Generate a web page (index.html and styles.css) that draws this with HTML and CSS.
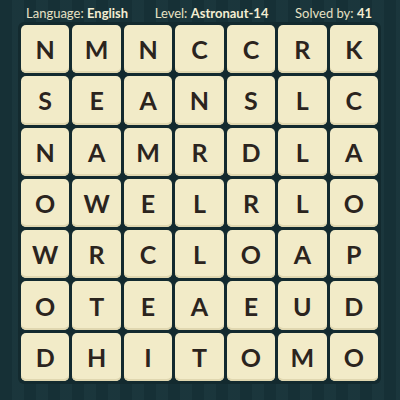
FILE: index.html
```html
<!DOCTYPE html>
<html lang="en">
<head>
    <meta charset="UTF-8">
    <title>Astronaut-14</title>
    <link rel="stylesheet" href="styles.css">
</head>
<body>
    <header class="info">
        <span class="info-item">Language: <b>English</b></span>
        <span class="info-item">Level: <b>Astronaut-14</b></span>
        <span class="info-item">Solved by: <b>41</b></span>
    </header>

    <div class="board">
        <div class="tile">N</div><div class="tile">M</div><div class="tile">N</div><div class="tile">C</div><div class="tile">C</div><div class="tile">R</div><div class="tile">K</div>
        <div class="tile">S</div><div class="tile">E</div><div class="tile">A</div><div class="tile">N</div><div class="tile">S</div><div class="tile">L</div><div class="tile">C</div>
        <div class="tile">N</div><div class="tile">A</div><div class="tile">M</div><div class="tile">R</div><div class="tile">D</div><div class="tile">L</div><div class="tile">A</div>
        <div class="tile">O</div><div class="tile">W</div><div class="tile">E</div><div class="tile">L</div><div class="tile">R</div><div class="tile">L</div><div class="tile">O</div>
        <div class="tile">W</div><div class="tile">R</div><div class="tile">C</div><div class="tile">L</div><div class="tile">O</div><div class="tile">A</div><div class="tile">P</div>
        <div class="tile">O</div><div class="tile">T</div><div class="tile">E</div><div class="tile">A</div><div class="tile">E</div><div class="tile">U</div><div class="tile">D</div>
        <div class="tile">D</div><div class="tile">H</div><div class="tile">I</div><div class="tile">T</div><div class="tile">O</div><div class="tile">M</div><div class="tile">O</div>
    </div>
</body>
</html>
```

FILE: styles.css
```css
* {
    margin: 0;
    padding: 0;
    box-sizing: border-box;
}

body {
    width: 400px;
    height: 400px;
    overflow: hidden;
    font-family: Lato, "Open Sans", sans-serif;
    background-color: #173339;
    background-image: repeating-linear-gradient(90deg,
        rgba(0, 0, 0, 0.06) 0px, rgba(0, 0, 0, 0.06) 12px,
        rgba(255, 255, 255, 0.015) 12px, rgba(255, 255, 255, 0.015) 24px);
}

.info {
    height: 25px;
    padding: 0 28px 0 26px;
    display: flex;
    justify-content: space-between;
    align-items: center;
    color: #e6e0c4;
    font-size: 13px;
}

.info b {
    font-weight: 700;
    color: #f3edd2;
}

.board {
    margin-left: 18px;
    width: 363px;
    padding: 3px;
    background-color: #132a2f;
    border-radius: 6px;
    display: grid;
    grid-template-columns: repeat(7, 1fr);
    grid-auto-rows: 48.3px;
    gap: 3px;
    margin-top: -3px;
}

.tile {
    background-color: #f2ebc8;
    border-radius: 5px;
    box-shadow: inset 0 -2px 0 #e0d7b0;
    display: flex;
    align-items: center;
    justify-content: center;
    color: #2b241e;
    font-size: 25px;
    font-weight: 700;
}
```
